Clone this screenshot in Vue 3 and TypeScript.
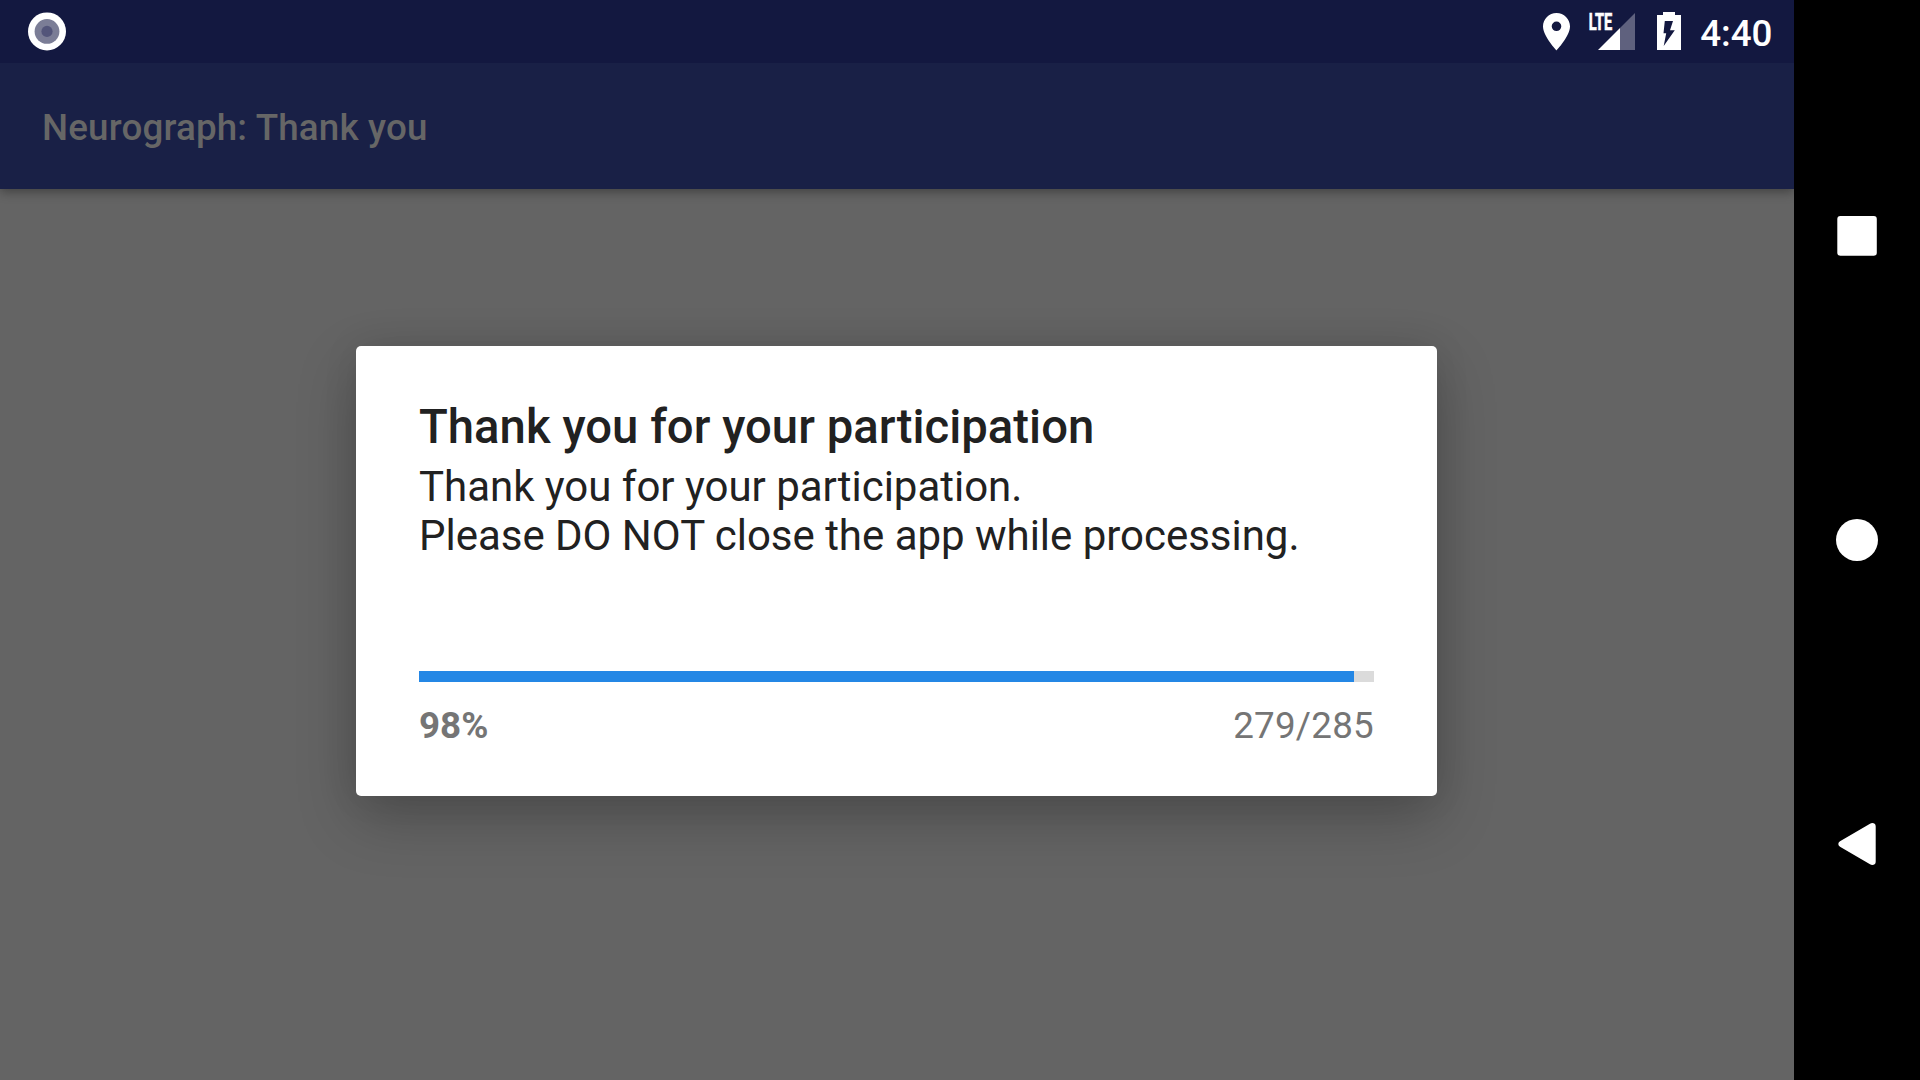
<script setup lang="ts">
import { computed, ref } from 'vue'

const done = ref(279)
const total = ref(285)
const ratio = computed(() => (done.value / total.value) * 100)
const percent = computed(() => `${Math.round(ratio.value)}%`)
</script>

<template>
  <div class="screen">
    <div class="app">
      <header class="status">
        <svg class="sync" width="38" height="39" viewBox="0 0 38 39">
          <circle cx="19" cy="19.4" r="19" fill="#fff" />
          <circle cx="19" cy="19.4" r="12.4" fill="#7b7d96" />
          <circle cx="19" cy="19.4" r="5.6" fill="#53557a" />
        </svg>
        <div class="indicators">
          <svg class="pin" width="27" height="38" viewBox="0 0 27 38">
            <path
              fill="#fff"
              fill-rule="evenodd"
              d="M13.5 0C6 0 0 6 0 13.3C0 23.3 13.5 37.500 13.5 37.500S27 23.3 27 13.3C27 6 21 0 13.5 0ZM13.5 8.5a4.8 4.8 0 1 1 0 9.6a4.8 4.8 0 0 1 0-9.6Z"
            />
          </svg>
          <svg class="signal" width="47" height="38" viewBox="0 0 47 38">
            <path d="M47 0V37H32V15Z" fill="#5f617e" />
            <path d="M32 15V37H10Z" fill="#fff" />
            <text class="lte" x="0.8" y="17" textLength="23.5" lengthAdjust="spacingAndGlyphs">LTE</text>
          </svg>
          <svg class="battery" width="24" height="38" viewBox="0 0 24 38">
            <path
              fill="#fff"
              fill-rule="evenodd"
              d="M6 0H18V3H24V38H0V3H6ZM7.8 9L6.5 21.3H9.2L6.7 34L17.8 18.3H13L16 9Z"
            />
          </svg>
          <span class="clock">4:40</span>
        </div>
      </header>
      <div class="appbar">
        <span class="appbar-title">Neurograph: Thank you</span>
      </div>
      <main class="content">
        <section class="dialog">
          <h1 class="title">Thank you for your participation</h1>
          <p class="message">
            <span class="line">Thank you for your participation.</span>
            <span class="line">Please DO NOT close the app while processing.</span>
          </p>
          <div class="track">
            <div class="fill" :style="{ width: ratio + '%' }"></div>
          </div>
          <div class="counts">
            <span class="percent">{{ percent }}</span>
            <span class="count">{{ done }}/{{ total }}</span>
          </div>
        </section>
      </main>
    </div>
    <nav class="nav">
      <svg width="42" height="42" viewBox="0 0 42 42">
        <rect x="1.3" y="1" width="39.5" height="39.7" rx="3" fill="#fff" />
      </svg>
      <svg width="42" height="42" viewBox="0 0 42 42">
        <circle cx="21" cy="21" r="21" fill="#fff" />
      </svg>
      <svg width="42" height="42" viewBox="0 0 42 42">
        <path
          fill="#fff"
          d="M4 18.3L34 .7Q36.500 -.8 39 1Q39.700 2 39.700 3.500V38.500Q39.700 40 39 41Q36.500 42.800 34 41.300L4 23.700Q2.300 22.500 2.300 21Q2.300 19.500 4 18.300Z"
        />
      </svg>
    </nav>
  </div>
</template>

<style>
body {
  margin: 0;
  background: #000;
}
</style>

<style scoped>
.screen {
  display: flex;
  width: 1920px;
  height: 1080px;
  overflow: hidden;
  background: #000;
  font-family: Roboto, 'Liberation Sans', sans-serif;
}
.app {
  display: flex;
  flex: none;
  flex-direction: column;
  width: 1794px;
  height: 1080px;
  overflow: hidden;
  background: #646464;
}
.nav {
  display: flex;
  flex: none;
  flex-direction: column;
  align-items: center;
  justify-content: center;
  gap: 262px;
  width: 126px;
}
.nav svg {
  overflow: visible;
}
.status {
  position: relative;
  z-index: 1;
  display: flex;
  flex: none;
  justify-content: space-between;
  box-sizing: border-box;
  height: 63px;
  padding: 12px 21.5px 0 28.4px;
  background: #131840;
}
.indicators {
  display: flex;
  align-items: flex-start;
}
.pin {
  margin: 1px 18.5px 0 0;
}
.signal {
  margin: 1px 22px 0 0;
  overflow: visible;
}
.battery {
  margin-right: 19px;
}
.lte {
  font-size: 23.4px;
  font-weight: 700;
  fill: #fff;
  stroke: #fff;
  stroke-width: 0.7px;
}
.clock {
  height: 43px;
  color: #fff;
  font-size: 36.75px;
  font-weight: 500;
  line-height: 43px;
}
.appbar {
  display: flex;
  flex: none;
  align-items: center;
  box-sizing: border-box;
  height: 126px;
  padding: 2px 0 0 42px;
  background: #192046;
  box-shadow: 0 3px 10px rgba(0, 0, 0, 0.35);
}
.appbar-title {
  color: #666;
  font-size: 36.75px;
  font-weight: 500;
  line-height: 43px;
  letter-spacing: 0.17px;
}
.content {
  flex: 1;
  padding: 157px 0 0 356px;
}
.dialog {
  box-sizing: border-box;
  width: 1081px;
  height: 450px;
  padding: 53px 63px 0;
  border-radius: 5px;
  background: #fff;
  box-shadow: 0 22px 60px rgba(0, 0, 0, 0.24), 0 0 36px rgba(0, 0, 0, 0.08);
}
.title {
  margin: 0;
  color: #212121;
  font-size: 47.25px;
  font-weight: 500;
  line-height: 56px;
  letter-spacing: 0.03px;
  white-space: nowrap;
}
.message {
  display: flex;
  flex-direction: column;
  height: 98px;
  margin: 7px 0 0;
  color: #212121;
  font-size: 42px;
  line-height: 49px;
  letter-spacing: -0.02px;
  white-space: nowrap;
}
.line {
  align-self: flex-start;
}
.track {
  height: 11px;
  margin-top: 111px;
  background: #dbdbdb;
}
.fill {
  height: 100%;
  background: #2487e5;
}
.counts {
  display: flex;
  justify-content: space-between;
  margin-top: 22px;
  color: #757575;
  font-size: 36.75px;
  line-height: 43px;
}
.percent {
  font-weight: 700;
}
.count {
  letter-spacing: 0.25px;
}
</style>
